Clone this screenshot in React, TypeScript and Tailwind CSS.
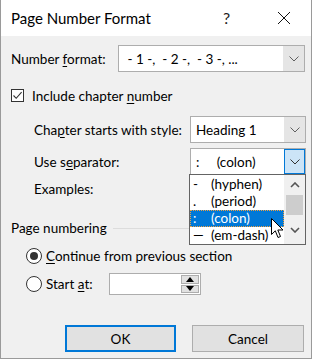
const font = { fontFamily: 'Lato, "Noto Sans", sans-serif' };

function Chevron({ className = "" }: { className?: string }) {
  return (
    <svg width="10" height="6" viewBox="0 0 10 6" className={className}>
      <path d="M0.5 0.5 L5 5 L9.5 0.5" fill="none" stroke="currentColor" strokeWidth="1" />
    </svg>
  );
}

function Combo({ value, width, focused = false }: { value: string; width: string; focused?: boolean }) {
  return (
    <div className={`flex h-[27px] shrink-0 border border-[#adadad] bg-white ${width}`}>
      <div className="flex flex-1 items-center pl-[5px] whitespace-pre">{value}</div>
      {focused ? (
        <div className="flex w-[21px] items-center justify-center border border-[#0078d7] bg-[#cce4f7] text-[#333]">
          <Chevron />
        </div>
      ) : (
        <div className="flex w-[21px] items-center justify-center bg-[#e5e5e5] text-[#606060]">
          <Chevron />
        </div>
      )}
    </div>
  );
}

function U({ children }: { children: string }) {
  return <span className="underline underline-offset-2 decoration-1">{children}</span>;
}

export default function App() {
  return (
    <div
      className="relative h-[359px] w-[312px] overflow-hidden border-x border-b border-[#9a9a9a] bg-[#f0f0f0] text-[13.5px] leading-[18px] text-black whitespace-nowrap"
      style={font}
    >
      {/* title bar */}
      <div className="flex h-[36px] items-center bg-white">
        <div className="pl-[10px] text-[15px] flex-1">Page Number Format</div>
        <div className="w-[20px] text-[16px] mr-[34px] text-[#222]">?</div>
        <svg width="14" height="14" viewBox="0 0 14 14" className="mr-[20px]">
          <path d="M1 1 L13 13 M13 1 L1 13" stroke="#111" strokeWidth="1" />
        </svg>
      </div>

      <div className="pl-[10px] pr-[6px]">
        <div className="mt-[9px] flex h-[27px] items-center">
          <div className="w-[107px] shrink-0">
            Number <U>f</U>ormat:
          </div>
          <Combo value=" - 1 -,  - 2 -,  - 3 -, ..." width="w-[187px]" />
        </div>

        <div className="mt-[15px] flex h-[17px] items-center">
          <div className="flex h-[13px] w-[13px] items-center justify-center border border-[#333] bg-white">
            <svg width="11" height="11" viewBox="0 0 11 11">
              <path d="M1.5 5.5 L4.2 8.3 L9.6 2.2" fill="none" stroke="#333" strokeWidth="1.1" />
            </svg>
          </div>
          <div className="ml-[8px]">
            Include chapter <U>n</U>umber
          </div>
        </div>

        <div className="mt-[12px] flex h-[27px] items-center pl-[23px]">
          <div className="w-[156px] shrink-0">
            Cha<U>p</U>ter starts with style:
          </div>
          <Combo value="Heading 1" width="w-[116px]" />
        </div>

        <div className="mt-[5px] flex h-[27px] items-center pl-[23px]">
          <div className="w-[156px] shrink-0">
            Use s<U>e</U>parator:
          </div>
          <Combo value=":     (colon)" width="w-[116px]" focused />
        </div>

        <div className="mt-[5px] flex h-[18px] items-center pl-[23px]">Examples:</div>

        <div className="mt-[21px] flex h-[18px] items-center">
          <div>Page numbering</div>
          <div className="ml-[6px] h-px flex-1 bg-[#dcdcdc]" />
        </div>

        <div className="mt-[10px] flex h-[18px] items-center pl-[15px]">
          <div className="flex h-[16px] w-[16px] items-center justify-center rounded-full border border-[#333] bg-white">
            <div className="h-[8px] w-[8px] rounded-full bg-[#333]" />
          </div>
          <div className="ml-[4px]">
            <U>C</U>ontinue from previous section
          </div>
        </div>

        <div className="mt-[8px] flex h-[22px] items-center pl-[15px]">
          <div className="h-[16px] w-[16px] rounded-full border border-[#333] bg-white" />
          <div className="ml-[4px] w-[63px]">
            Start <U>a</U>t:
          </div>
          <div className="flex h-[22px] w-[92px] items-stretch border border-[#adadad] bg-white p-px">
            <div className="flex-1" />
            <div className="flex w-[18px] flex-col gap-px">
              <div className="flex flex-1 items-center justify-center border border-[#adadad] bg-[#e1e1e1]">
                <svg width="8" height="5" viewBox="0 0 8 5">
                  <path d="M0 5 L4 0 L8 5 Z" fill="#000" />
                </svg>
              </div>
              <div className="flex flex-1 items-center justify-center border border-[#adadad] bg-[#e1e1e1]">
                <svg width="8" height="5" viewBox="0 0 8 5">
                  <path d="M0 0 L8 0 L4 5 Z" fill="#000" />
                </svg>
              </div>
            </div>
          </div>
        </div>

        <div className="mt-[30px] flex h-[27px] justify-end gap-[16px] pr-[1px]">
          <button className="h-[27px] w-[111px] border-2 border-[#0078d7] bg-[#e1e1e1]">OK</button>
          <button className="h-[27px] w-[112px] border border-[#adadad] bg-[#e1e1e1]">Cancel</button>
        </div>
      </div>

      {/* open dropdown list */}
      <div className="absolute left-[188px] top-[174px] flex h-[71px] w-[117px] border border-[#646464] bg-white leading-[15px]">
        <div className="flex-1 pt-px">
          {[
            ["-", "(hyphen)"],
            [".", "(period)"],
            [":", "(colon)"],
            ["\u2014", "(em-dash)"],
          ].map(([s, t], i) => (
            <div
              key={t}
              className={`flex h-[17px] items-center ${
                i === 2 ? "border border-dotted border-[#f0a040] bg-[#0078d7] text-white" : "border border-transparent"
              }`}
            >
              <span className="w-[20px] pl-[2px]">{s}</span>
              <span>{t}</span>
            </div>
          ))}
        </div>
        <div className="flex w-[21px] flex-col items-center bg-[#f0f0f0]">
          <div className="flex h-[20px] items-center">
            <svg width="10" height="6" viewBox="0 0 10 6">
              <path d="M1 5 L5 1 L9 5" fill="none" stroke="#555" strokeWidth="1.6" />
            </svg>
          </div>
          <div className="h-[20px] w-[17px] bg-[#cdcdcd]" />
          <div className="flex flex-1 items-center">
            <svg width="10" height="6" viewBox="0 0 10 6">
              <path d="M1 1 L5 5 L9 1" fill="none" stroke="#555" strokeWidth="1.6" />
            </svg>
          </div>
        </div>
      </div>

      {/* mouse pointer */}
      <svg className="absolute left-[270px] top-[218px]" width="13" height="21" viewBox="0 0 13 21">
        <path d="M0.5 0.5 L0.5 16.5 L4.3 12.8 L7 19.5 L9.5 18.5 L6.8 12 L12 12 Z" fill="#fff" stroke="#000" strokeWidth="1" />
      </svg>
    </div>
  );
}
